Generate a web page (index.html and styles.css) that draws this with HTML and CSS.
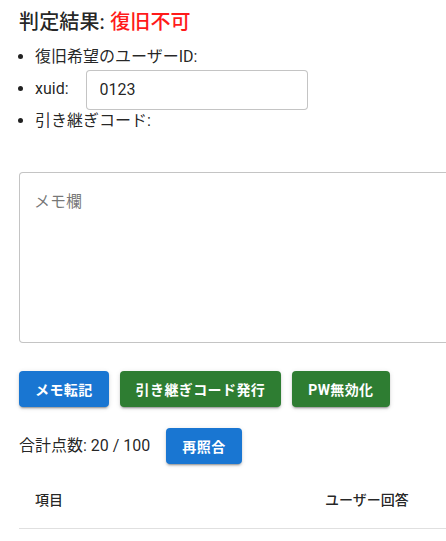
FILE: index.html
```html
<!DOCTYPE html>
<html lang="ja">
<head>
<meta charset="utf-8">
<link rel="stylesheet" href="styles.css">
</head>
<body>
<div class="page">
  <h6 class="title">判定結果: <span class="bad">復旧不可</span></h6>
  <ul class="info">
    <li>復旧希望のユーザーID:</li>
    <li class="row">xuid: <span class="field"><input class="input" value="0123"></span></li>
    <li>引き継ぎコード:</li>
  </ul>
  <div class="memo">
    <textarea class="memo-text" rows="6" placeholder="メモ欄"></textarea>
  </div>
  <div class="actions">
    <button class="btn blue">メモ転記</button>
    <button class="btn green">引き継ぎコード発行</button>
    <button class="btn green">PW無効化</button>
  </div>
  <div class="score">
    <span class="score-text">合計点数: 20 / 100</span>
    <button class="btn blue">再照合</button>
  </div>
  <table class="tbl">
    <thead>
      <tr><th class="c1">項目</th><th class="c2">ユーザー回答</th><th class="c3"></th></tr>
    </thead>
  </table>
</div>
</body>
</html>
```
FILE: styles.css
```css
html, body {
  margin: 0;
  padding: 0;
  overflow: hidden;
  background: #fff;
}
body {
  font-family: Roboto, "Noto Sans CJK JP", sans-serif;
  color: rgba(0, 0, 0, 0.87);
  font-size: 16px;
  line-height: 1.5;
}
.page {
  padding: 6px 0 0 19px;
  width: 700px;
}
.title {
  margin: 0 0 7px;
  font-size: 20px;
  font-weight: 500;
  line-height: 32px;
  letter-spacing: 0.15px;
}
.bad {
  color: #ff1a1a;
}
.info {
  margin: 0;
  padding-left: 16px;
}
.info li {
  line-height: 24px;
}
.row {
  height: 40px;
  line-height: 40px !important;
}
.field {
  display: inline-block;
  vertical-align: middle;
  line-height: normal;
  margin-left: 13px;
}
.input {
  box-sizing: border-box;
  display: block;
  width: 222px;
  height: 40px;
  padding: 8.5px 13px;
  border: 1px solid rgba(0, 0, 0, 0.23);
  border-radius: 4px;
  font: 16px Roboto, "Noto Sans CJK JP", sans-serif;
  color: rgba(0, 0, 0, 0.87);
  outline: none;
}
.memo {
  margin-top: 39px;
}
.memo-text {
  box-sizing: border-box;
  display: block;
  width: 640px;
  height: 171px;
  padding: 16.5px 14px;
  border: 1px solid rgba(0, 0, 0, 0.23);
  border-radius: 4px;
  font: 16px/23px Roboto, "Noto Sans CJK JP", sans-serif;
  resize: none;
  outline: none;
}
.memo-text::placeholder {
  color: rgba(0, 0, 0, 0.55);
}
.actions {
  display: flex;
  gap: 11px;
  margin-top: 28px;
}
.btn {
  height: 36px;
  min-width: 64px;
  padding: 0 16px;
  border: none;
  border-radius: 4px;
  font-family: Roboto, "Noto Sans CJK JP", sans-serif;
  font-size: 14px;
  font-weight: 700;
  letter-spacing: 0.4px;
  color: #fff;
  box-shadow: 0 3px 1px -2px rgba(0,0,0,0.2), 0 2px 2px 0 rgba(0,0,0,0.14), 0 1px 5px 0 rgba(0,0,0,0.12);
  cursor: pointer;
}
.blue { background: #1976d2; }
.green { background: #2e7d32; }
.score {
  display: flex;
  align-items: center;
  gap: 16px;
  margin-top: 21px;
}
.tbl {
  margin-top: 8px;
  width: 700px;
  border-collapse: collapse;
}
.tbl th {
  text-align: left;
  padding: 16px;
  font-size: 14px;
  font-weight: 500;
  line-height: 24px;
  border-bottom: 1px solid rgb(224, 224, 224);
}
.c1 { width: 258px; }
.c2 { width: 150px; }
```
